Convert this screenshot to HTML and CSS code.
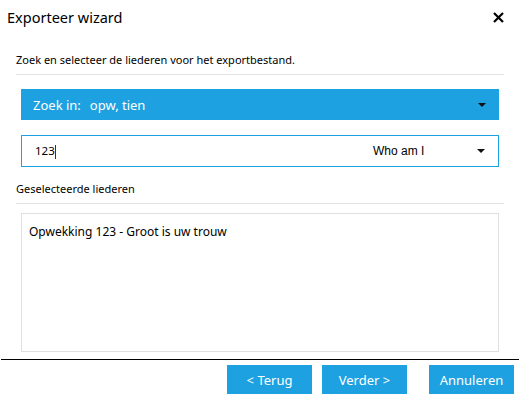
FILE: index.html
```html
<!DOCTYPE html>
<html>
<head>
    <title>Exporteer wizard</title>
    <link rel="stylesheet" href="styles.css">
</head>
<body>
    <!-- Title bar -->
    <header class="titlebar">
        <span class="title">Exporteer wizard</span>
        <svg class="close" width="11" height="11" viewBox="0 0 11 11">
            <path d="M1 1 L10 10 M10 1 L1 10" stroke="#000" stroke-width="2.2"/>
        </svg>
    </header>

    <main class="content">
        <p class="heading">Zoek en selecteer de liederen voor het exportbestand.</p>

        <!-- Search scope -->
        <div class="scope">
            <span class="scope-label">Zoek in:</span>
            <span class="scope-value">opw, tien</span>
            <span class="arrow"></span>
        </div>

        <!-- Search box -->
        <div class="search">
            <span class="search-text">123<span class="caret"></span></span>
            <span class="suggest">Who am I</span>
            <span class="arrow"></span>
        </div>

        <p class="heading heading-list">Geselecteerde liederen</p>

        <!-- Selected songs -->
        <div class="list">
            <div class="list-item">Opwekking 123 - Groot is uw trouw</div>
        </div>
    </main>

    <!-- Footer buttons -->
    <footer class="buttons">
        <button class="btn">&lt; Terug</button>
        <button class="btn">Verder &gt;</button>
        <button class="btn btn-cancel">Annuleren</button>
    </footer>
</body>
</html>
```

FILE: styles.css
```css
* {
    box-sizing: border-box;
}
body {
    font-family: "Noto Sans", sans-serif;
    background-color: white;
    color: #000;
    margin: 0;
    padding: 0;
    width: 520px;
    height: 400px;
    overflow: hidden;
}
.titlebar {
    display: flex;
    justify-content: space-between;
    align-items: center;
    height: 34px;
    padding: 0 16px 0 7px;
}
.title {
    font-size: 14.5px;
}
.content {
    padding: 13px 16px 0 16px;
}
.heading {
    margin: 0;
    font-size: 11px;
    padding: 5px 0 7px 0;
    border-bottom: 1px solid #e3e3e3;
}
.heading-list {
    margin-top: 10px;
    padding-top: 4px;
}
.scope {
    display: flex;
    align-items: center;
    height: 31px;
    margin: 14px 5px 0 5px;
    padding: 0 13px 0 12px;
    background-color: #1ea1e1;
    color: white;
    font-size: 13px;
}
.scope-label {
    margin-right: 9px;
}
.scope-value {
    flex: 1;
}
.arrow {
    width: 0;
    height: 0;
    border-left: 4px solid transparent;
    border-right: 4px solid transparent;
    border-top: 4px solid #111;
}
.search {
    display: flex;
    align-items: center;
    height: 32px;
    margin: 15px 5px 0 5px;
    padding: 0 13px 0 13px;
    border: 1px solid #1ea1e1;
    font-size: 11.5px;
}
.search-text {
    flex: 1;
}
.caret {
    display: inline-block;
    width: 1px;
    height: 14px;
    background-color: #333;
    vertical-align: middle;
}
.suggest {
    font-family: "Liberation Sans", sans-serif;
    font-size: 12px;
    width: 104px;
}
.list {
    height: 139px;
    margin: 9px 5px 0 5px;
    border: 1px solid #e0e0e0;
    padding: 9px 7px;
}
.list-item {
    font-size: 12px;
}
.buttons {
    display: flex;
    justify-content: flex-end;
    margin: 7px 1px 0 1px;
    border-top: 1px solid #000;
    padding: 5px 5px 0 0;
}
.btn {
    width: 85px;
    height: 29px;
    margin-left: 10px;
    border: none;
    background-color: #1ea1e1;
    color: white;
    font-family: "Noto Sans", sans-serif;
    font-size: 13px;
}
.btn-cancel {
    margin-left: 22px;
}
```
